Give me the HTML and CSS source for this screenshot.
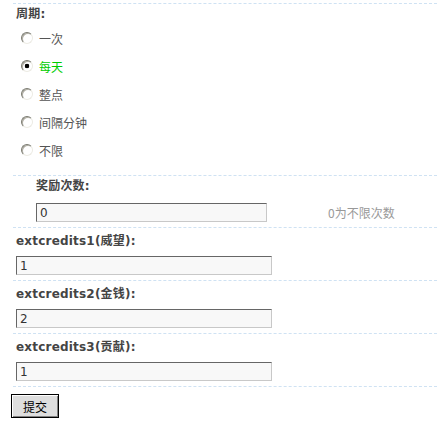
FILE: index.html
```html
<!DOCTYPE html>
<html lang="zh-CN">
<head>
<meta charset="utf-8">
<title>奖励设置</title>
<link rel="stylesheet" href="styles.css">
</head>
<body>
<form class="form">
  <div class="row row-period">
    <div class="label">周期:</div>
    <ul class="options">
      <li class="option"><input type="radio" name="cycle" class="radio"><span>一次</span></li>
      <li class="option option-on"><input type="radio" name="cycle" class="radio" checked><span>每天</span></li>
      <li class="option"><input type="radio" name="cycle" class="radio"><span>整点</span></li>
      <li class="option"><input type="radio" name="cycle" class="radio"><span>间隔分钟</span></li>
      <li class="option"><input type="radio" name="cycle" class="radio"><span>不限</span></li>
    </ul>
  </div>
  <div class="row row-reward">
    <div class="label">奖励次数:</div>
    <div class="field">
      <input type="text" class="text text-short" value="0">
      <span class="hint">0为不限次数</span>
    </div>
  </div>
  <div class="row row-credit">
    <div class="label">extcredits1(威望):</div>
    <div class="field"><input type="text" class="text" value="1"></div>
  </div>
  <div class="row row-credit">
    <div class="label">extcredits2(金钱):</div>
    <div class="field"><input type="text" class="text" value="2"></div>
  </div>
  <div class="row row-credit row-last">
    <div class="label">extcredits3(贡献):</div>
    <div class="field"><input type="text" class="text" value="1"></div>
  </div>
</form>
<div class="actions">
  <button type="button" class="btn">提交</button>
</div>
</body>
</html>
```

FILE: styles.css
```css
html, body {
  margin: 0;
  padding: 0;
  background: #fff;
}

body {
  font-family: "DejaVu Sans", "Noto Sans CJK SC", sans-serif;
  font-size: 12px;
  color: #444;
}

.form {
  margin: 3px 0 0 13px;
}

.row {
  border-top: 1px dashed #cfe2f3;
}

.row-last {
  border-bottom: 1px dashed #cfe2f3;
}

.label {
  font-weight: bold;
  line-height: 17px;
  height: 17px;
  padding-left: 3px;
  color: #444;
  white-space: nowrap;
  letter-spacing: 0.2px;
}

/* period */
.row-period {
  padding: 2px 0 11px;
}

.options {
  list-style: none;
  margin: 1px 0 0;
  padding: 0;
}

.option {
  display: flex;
  align-items: center;
  height: 28px;
  padding-left: 8px;
  color: #555;
  font-family: "Noto Sans CJK SC", sans-serif;
}

.option-on {
  color: #00cc00;
}

.radio {
  appearance: none;
  -webkit-appearance: none;
  box-sizing: border-box;
  width: 12px;
  height: 12px;
  margin: 0 6px 0 0;
  border: 1px solid;
  border-color: #7a7a70 #ecebe4 #ecebe4 #7a7a70;
  border-radius: 50%;
  background: #fff;
  box-shadow: inset 1px 1px 0 #b0aea4;
}

.radio:checked {
  background: radial-gradient(circle, #000 0 2px, #fff 2.6px);
}

/* reward */
.row-reward {
  padding: 2px 0 5px;
}

.row-reward .label {
  padding-left: 23px;
}

.row-reward .field {
  margin-top: 8px;
  padding-left: 23px;
}

.field {
  display: flex;
  align-items: center;
}

.hint {
  margin-left: 61px;
  color: #999;
  font-family: "Noto Sans CJK SC", sans-serif;
  line-height: 19px;
}

/* credits */
.row-credit {
  padding: 5px 0 5px;
}

.row-credit .field {
  margin-top: 6px;
  padding-left: 3px;
}

.text {
  box-sizing: border-box;
  width: 256px;
  height: 19px;
  margin: 0;
  padding: 0 3px;
  border: 1px solid;
  border-color: #666 #c8c8c8 #c8c8c8 #666;
  background: #f8f8f8;
  font-family: "DejaVu Sans", sans-serif;
  font-size: 12px;
  color: #333;
  outline: none;
}

.text-short {
  width: 231px;
}

/* actions */
.actions {
  margin-top: 7px;
  padding-left: 11px;
}

.btn {
  box-sizing: border-box;
  width: 48px;
  height: 24px;
  margin: 0;
  padding: 0;
  border: 1px solid #000;
  box-shadow: inset 1px 1px 0 #fff, inset -1px -1px 0 #808080;
  background: #dedede;
  font-family: "Noto Sans CJK SC", sans-serif;
  font-size: 12px;
  color: #000;
}
```
